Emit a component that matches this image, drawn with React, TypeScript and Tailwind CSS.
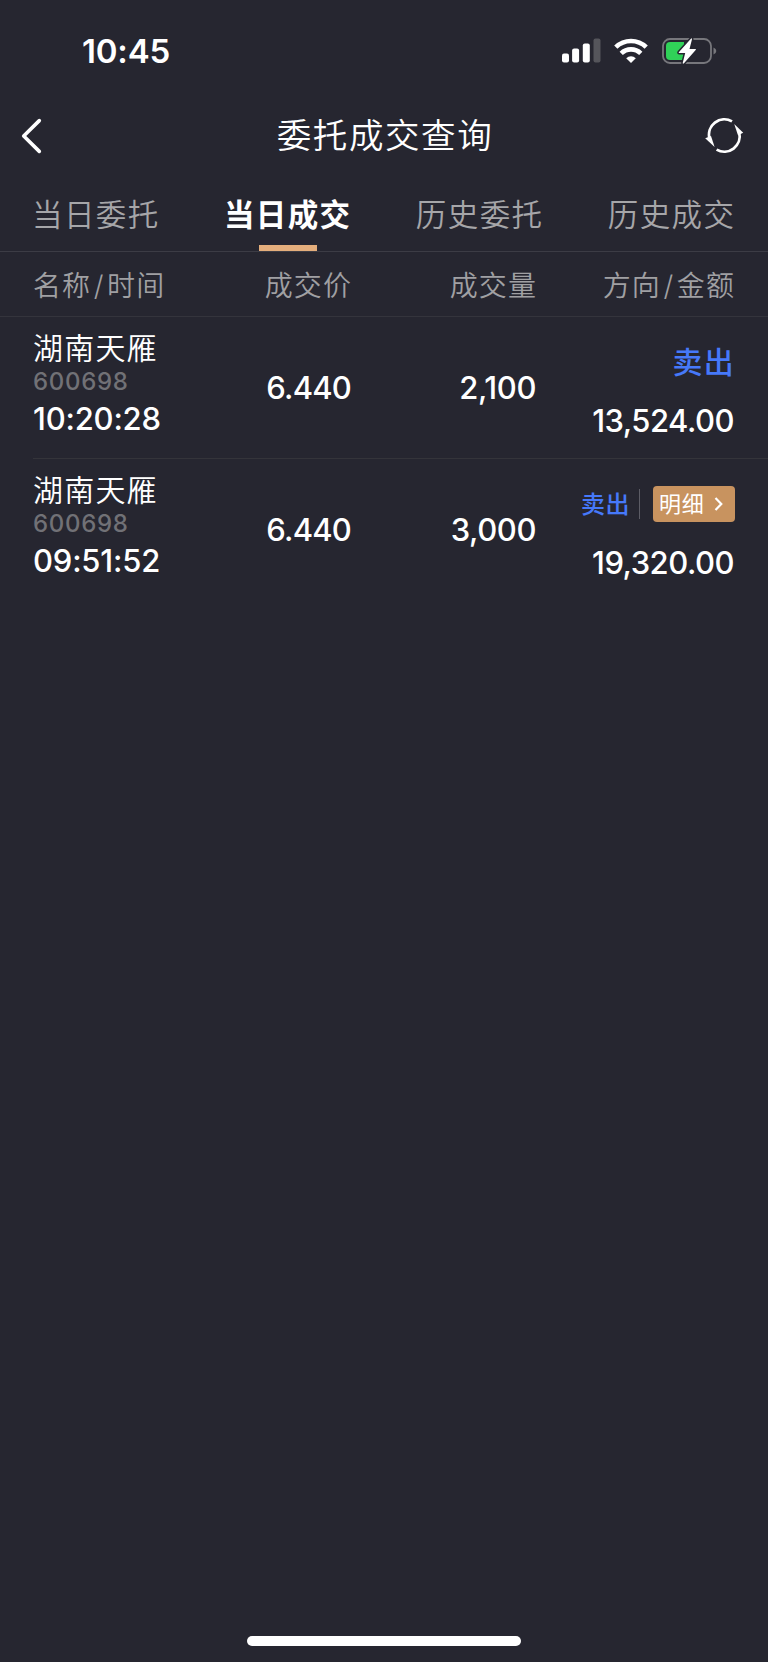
import clsx from "clsx";

const tabs = ["当日委托", "当日成交", "历史委托", "历史成交"];

const trades = [
  {
    name: "湖南天雁",
    code: "600698",
    time: "10:20:28",
    price: "6.440",
    volume: "2,100",
    side: "卖出",
    amount: "13,524.00",
    detail: false,
  },
  {
    name: "湖南天雁",
    code: "600698",
    time: "09:51:52",
    price: "6.440",
    volume: "3,000",
    side: "卖出",
    amount: "19,320.00",
    detail: true,
  },
];

function StatusBar() {
  return (
    <div className="flex h-[102px] items-center justify-between pl-[82px] pr-[51px]">
      <span className="text-[33px] leading-[40px] font-semibold tracking-[-0.2px]">10:45</span>
      <div className="flex items-center">
        <svg width="39" height="26" viewBox="0.5 0 39 26" fill="#fff">
          <rect x="0.5" y="15.5" width="7" height="9" rx="2" />
          <rect x="10.6" y="10.5" width="7" height="14" rx="2" />
          <rect x="21.3" y="5.5" width="7" height="19" rx="2" />
          <rect x="32" y="0.5" width="7" height="24" rx="2" fill="#55555b" />
        </svg>
        <svg className="ml-[13px]" width="34" height="26" viewBox="0 0 34 26" fill="none" stroke="#fff" strokeWidth="4.6">
          <path d="M1.8 9.2 A21.8 21.8 0 0 1 32.2 9.2" />
          <path d="M7.2 15.4 A14 14 0 0 1 26.8 15.4" />
          <path d="M12.2 20.2 A7 7 0 0 1 21.8 20.2 L17 25 Z" fill="#fff" stroke="none" />
        </svg>
        <svg className="ml-[14px]" width="55" height="28" viewBox="0 0 55 28">
          <rect x="1" y="2" width="48" height="24" rx="7" fill="none" stroke="#77777c" strokeWidth="1.8" />
          <path d="M51.5 10.5 Q54.3 11.5 54.3 14 Q54.3 16.5 51.5 17.5 Z" fill="#77777c" />
          <path d="M8 5 H22 V23 H8 Q4 23 4 19 V9 Q4 5 8 5 Z" fill="#30d158" />
          <path
            d="M28.9 1.7 L16.8 15.2 Q16.3 16 17.3 16 H23.2 L20.7 26 Q20.8 27.4 22 26.3 L33.9 12.8 Q34.3 11.9 33.3 11.9 H27.5 L30 2.3 Q30 0.8 28.9 1.7 Z"
            fill="#fff"
            stroke="#262630"
            strokeWidth="3"
            paintOrder="stroke"
          />
        </svg>
      </div>
    </div>
  );
}

function NavBar() {
  return (
    <div className="flex h-[68px] items-center justify-between pl-[21px] pr-[24px]">
      <svg width="40" height="36" viewBox="0 0 40 36" fill="none" stroke="#fff" strokeWidth="3.6" strokeLinecap="round" strokeLinejoin="round">
        <path d="M18.3 2.6 L2.7 18 L18.3 33.4" />
      </svg>
      <h1 className="mb-px ml-[5px] text-[34.5px] leading-[50px] font-[350] tracking-[1.6px]">委托成交查询</h1>
      <svg width="40" height="36" viewBox="0 0 40 36" fill="none" stroke="#fff" strokeWidth="2.8">
        <path d="M28 3.4 A15.4 15.4 0 0 0 5.6 21" />
        <path d="M12.6 31.6 A15.4 15.4 0 0 0 35.2 14.5" />
        <path d="M30.2 6 L39.2 14.8 L34 17.2 Z" fill="#fff" stroke="none" />
        <path d="M10.6 29 L1.2 20.2 L7 18 Z" fill="#fff" stroke="none" />
      </svg>
    </div>
  );
}

function Tabs() {
  return (
    <div className="flex h-[82px] justify-between border-b border-[#3c3c45] pl-[32px] pr-[34px]">
      {tabs.map((tab, i) => (
        <div key={tab} className="flex flex-col items-center">
          <div
            className={clsx(
              "flex h-[75px] items-center pt-[15px] text-[30.5px] leading-[44px] tracking-[1.4px]",
              i === 1 ? "font-bold text-white" : "font-[350] text-[#a6a6a9]"
            )}
          >
            <span className="-mr-[1.4px]">{tab}</span>
          </div>
          {i === 1 && <div className="ml-[2px] h-[6px] w-[58px] bg-[#e4ae7c]" />}
        </div>
      ))}
    </div>
  );
}

function ColumnHeads() {
  return (
    <div className="grid h-[65px] grid-cols-[150px_169px_185px_198px] items-center border-b border-[#34343c] pl-[33px] pt-[3px] text-right text-[28px] font-[350] tracking-[1.1px] text-[#a0a0a3]">
      <span className="text-left">
        名称<span className="mx-[2.5px]">/</span>时间
      </span>
      <span>成交价</span>
      <span>成交量</span>
      <span>
        方向<span className="mx-[2.5px]">/</span>金额
      </span>
    </div>
  );
}

export default function App() {
  return (
    <div className="flex h-[1663px] w-[768px] flex-col border-b border-white bg-[#262630] font-[Inter,'Noto_Sans_CJK_SC',sans-serif] text-white">
      <StatusBar />
      <NavBar />
      <Tabs />
      <ColumnHeads />

      {trades.map((trade, i) => (
        <div key={trade.time} className="pl-[33px]">
          <div
            className={clsx(
              "grid h-[142px] grid-cols-[150px_168px_185px_198px] text-right text-[31px] font-medium",
              i < trades.length - 1 && "border-b border-[#34343a]"
            )}
          >
            <div className="flex flex-col pt-[9px] text-left">
              <span className="text-[30px] leading-[44px] font-[350] tracking-[1.2px]">{trade.name}</span>
              <span className="text-[24px] leading-[23px] tracking-[0.7px] text-[#717176]">{trade.code}</span>
              <span className="mt-[4px] text-[31px] leading-[44px] tracking-[-0.2px]">{trade.time}</span>
            </div>
            <span className="pt-[49px] leading-[44px] tracking-[-0.8px]">{trade.price}</span>
            <span className="pt-[49px] leading-[44px] tracking-[-0.4px]">{trade.volume}</span>
            <div className="flex flex-col items-end">
              <div className="flex h-[90px] items-center justify-end text-[#4679fa]">
                <span className={clsx(trade.detail ? "mt-[2px] text-[24px] tracking-[0.5px]" : "-mr-px text-[30px] tracking-[1.2px]")}>
                  {trade.side}
                </span>
                {trade.detail && (
                  <>
                    <span className="ml-[9px] h-[30px] w-px bg-[#5c5c65]" />
                    <button className="-mr-px ml-[13px] flex h-[36px] w-[82px] items-center rounded-[4px] bg-[#c8935f] pl-[6px] text-white">
                      <span className="text-[22px] leading-[32px] font-normal tracking-[0.8px]">明细</span>
                      <svg className="ml-[9px]" width="9" height="14" viewBox="0 0 9 14" fill="none" stroke="#fff" strokeWidth="2.2">
                        <path d="M1.5 1 L7.3 7 L1.5 13" />
                      </svg>
                    </button>
                  </>
                )}
              </div>
              <span className="-mt-[8px] leading-[44px] tracking-[-0.5px]">{trade.amount}</span>
            </div>
          </div>
        </div>
      ))}

      {/* Home indicator */}
      <div className="mt-auto mb-[16px] h-[10px] w-[274px] self-center rounded-full bg-white" />
    </div>
  );
}
